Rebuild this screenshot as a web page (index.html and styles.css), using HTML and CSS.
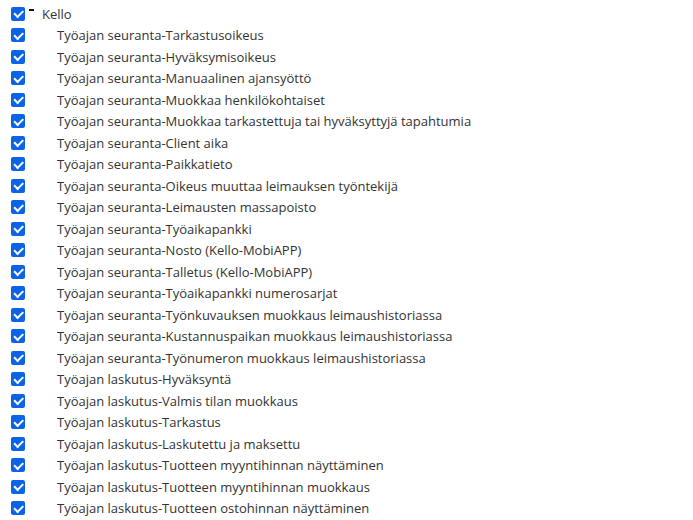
FILE: index.html
```html
<!DOCTYPE html>
<html lang="fi">
<head>
<meta charset="utf-8">
<link rel="stylesheet" href="styles.css">
</head>
<body>
<ul class="tree">
  <li class="row parent">
    <input type="checkbox" class="cb" checked>
    <span class="toggle"></span>
    <span class="label">Kello</span>
  </li>
  <li class="row child"><input type="checkbox" class="cb" checked><span class="label">Työajan seuranta-Tarkastusoikeus</span></li>
  <li class="row child"><input type="checkbox" class="cb" checked><span class="label">Työajan seuranta-Hyväksymisoikeus</span></li>
  <li class="row child"><input type="checkbox" class="cb" checked><span class="label">Työajan seuranta-Manuaalinen ajansyöttö</span></li>
  <li class="row child"><input type="checkbox" class="cb" checked><span class="label">Työajan seuranta-Muokkaa henkilökohtaiset</span></li>
  <li class="row child"><input type="checkbox" class="cb" checked><span class="label">Työajan seuranta-Muokkaa tarkastettuja tai hyväksyttyjä tapahtumia</span></li>
  <li class="row child"><input type="checkbox" class="cb" checked><span class="label">Työajan seuranta-Client aika</span></li>
  <li class="row child"><input type="checkbox" class="cb" checked><span class="label">Työajan seuranta-Paikkatieto</span></li>
  <li class="row child"><input type="checkbox" class="cb" checked><span class="label">Työajan seuranta-Oikeus muuttaa leimauksen työntekijä</span></li>
  <li class="row child"><input type="checkbox" class="cb" checked><span class="label">Työajan seuranta-Leimausten massapoisto</span></li>
  <li class="row child"><input type="checkbox" class="cb" checked><span class="label">Työajan seuranta-Työaikapankki</span></li>
  <li class="row child"><input type="checkbox" class="cb" checked><span class="label">Työajan seuranta-Nosto (Kello-MobiAPP)</span></li>
  <li class="row child"><input type="checkbox" class="cb" checked><span class="label">Työajan seuranta-Talletus (Kello-MobiAPP)</span></li>
  <li class="row child"><input type="checkbox" class="cb" checked><span class="label">Työajan seuranta-Työaikapankki numerosarjat</span></li>
  <li class="row child"><input type="checkbox" class="cb" checked><span class="label">Työajan seuranta-Työnkuvauksen muokkaus leimaushistoriassa</span></li>
  <li class="row child"><input type="checkbox" class="cb" checked><span class="label">Työajan seuranta-Kustannuspaikan muokkaus leimaushistoriassa</span></li>
  <li class="row child"><input type="checkbox" class="cb" checked><span class="label">Työajan seuranta-Työnumeron muokkaus leimaushistoriassa</span></li>
  <li class="row child"><input type="checkbox" class="cb" checked><span class="label">Työajan laskutus-Hyväksyntä</span></li>
  <li class="row child"><input type="checkbox" class="cb" checked><span class="label">Työajan laskutus-Valmis tilan muokkaus</span></li>
  <li class="row child"><input type="checkbox" class="cb" checked><span class="label">Työajan laskutus-Tarkastus</span></li>
  <li class="row child"><input type="checkbox" class="cb" checked><span class="label">Työajan laskutus-Laskutettu ja maksettu</span></li>
  <li class="row child"><input type="checkbox" class="cb" checked><span class="label">Työajan laskutus-Tuotteen myyntihinnan näyttäminen</span></li>
  <li class="row child"><input type="checkbox" class="cb" checked><span class="label">Työajan laskutus-Tuotteen myyntihinnan muokkaus</span></li>
  <li class="row child"><input type="checkbox" class="cb" checked><span class="label">Työajan laskutus-Tuotteen ostohinnan näyttäminen</span></li>
</ul>
</body>
</html>
```
FILE: styles.css
```css
html, body {
  margin: 0;
  padding: 0;
  background: #ffffff;
}
body {
  font-family: "Open Sans", "Noto Sans", sans-serif;
  font-size: 13px;
  color: #333333;
  overflow: hidden;
}
.tree {
  list-style: none;
  margin: 0;
  padding: 3px 0 0 11px;
}
.row {
  display: flex;
  align-items: center;
  height: 21.5px;
}
.cb {
  appearance: none;
  -webkit-appearance: none;
  width: 14px;
  height: 14px;
  margin: 0;
  border-radius: 2px;
  background: #0b63e5;
  position: relative;
  flex: none;
}
.cb::after {
  content: "";
  position: absolute;
  left: 3px;
  top: 3.5px;
  width: 7px;
  height: 3.5px;
  border-left: 2px solid #fff;
  border-bottom: 2px solid #fff;
  transform: rotate(-45deg);
  transform-origin: center;
}
.toggle {
  width: 5px;
  height: 2px;
  background: #111;
  margin: 0 8px 0 4px;
  align-self: flex-start;
  margin-top: 6px;
}
.parent .label {
  margin-left: 0;
}
.child .label {
  margin-left: 32px;
}
```
